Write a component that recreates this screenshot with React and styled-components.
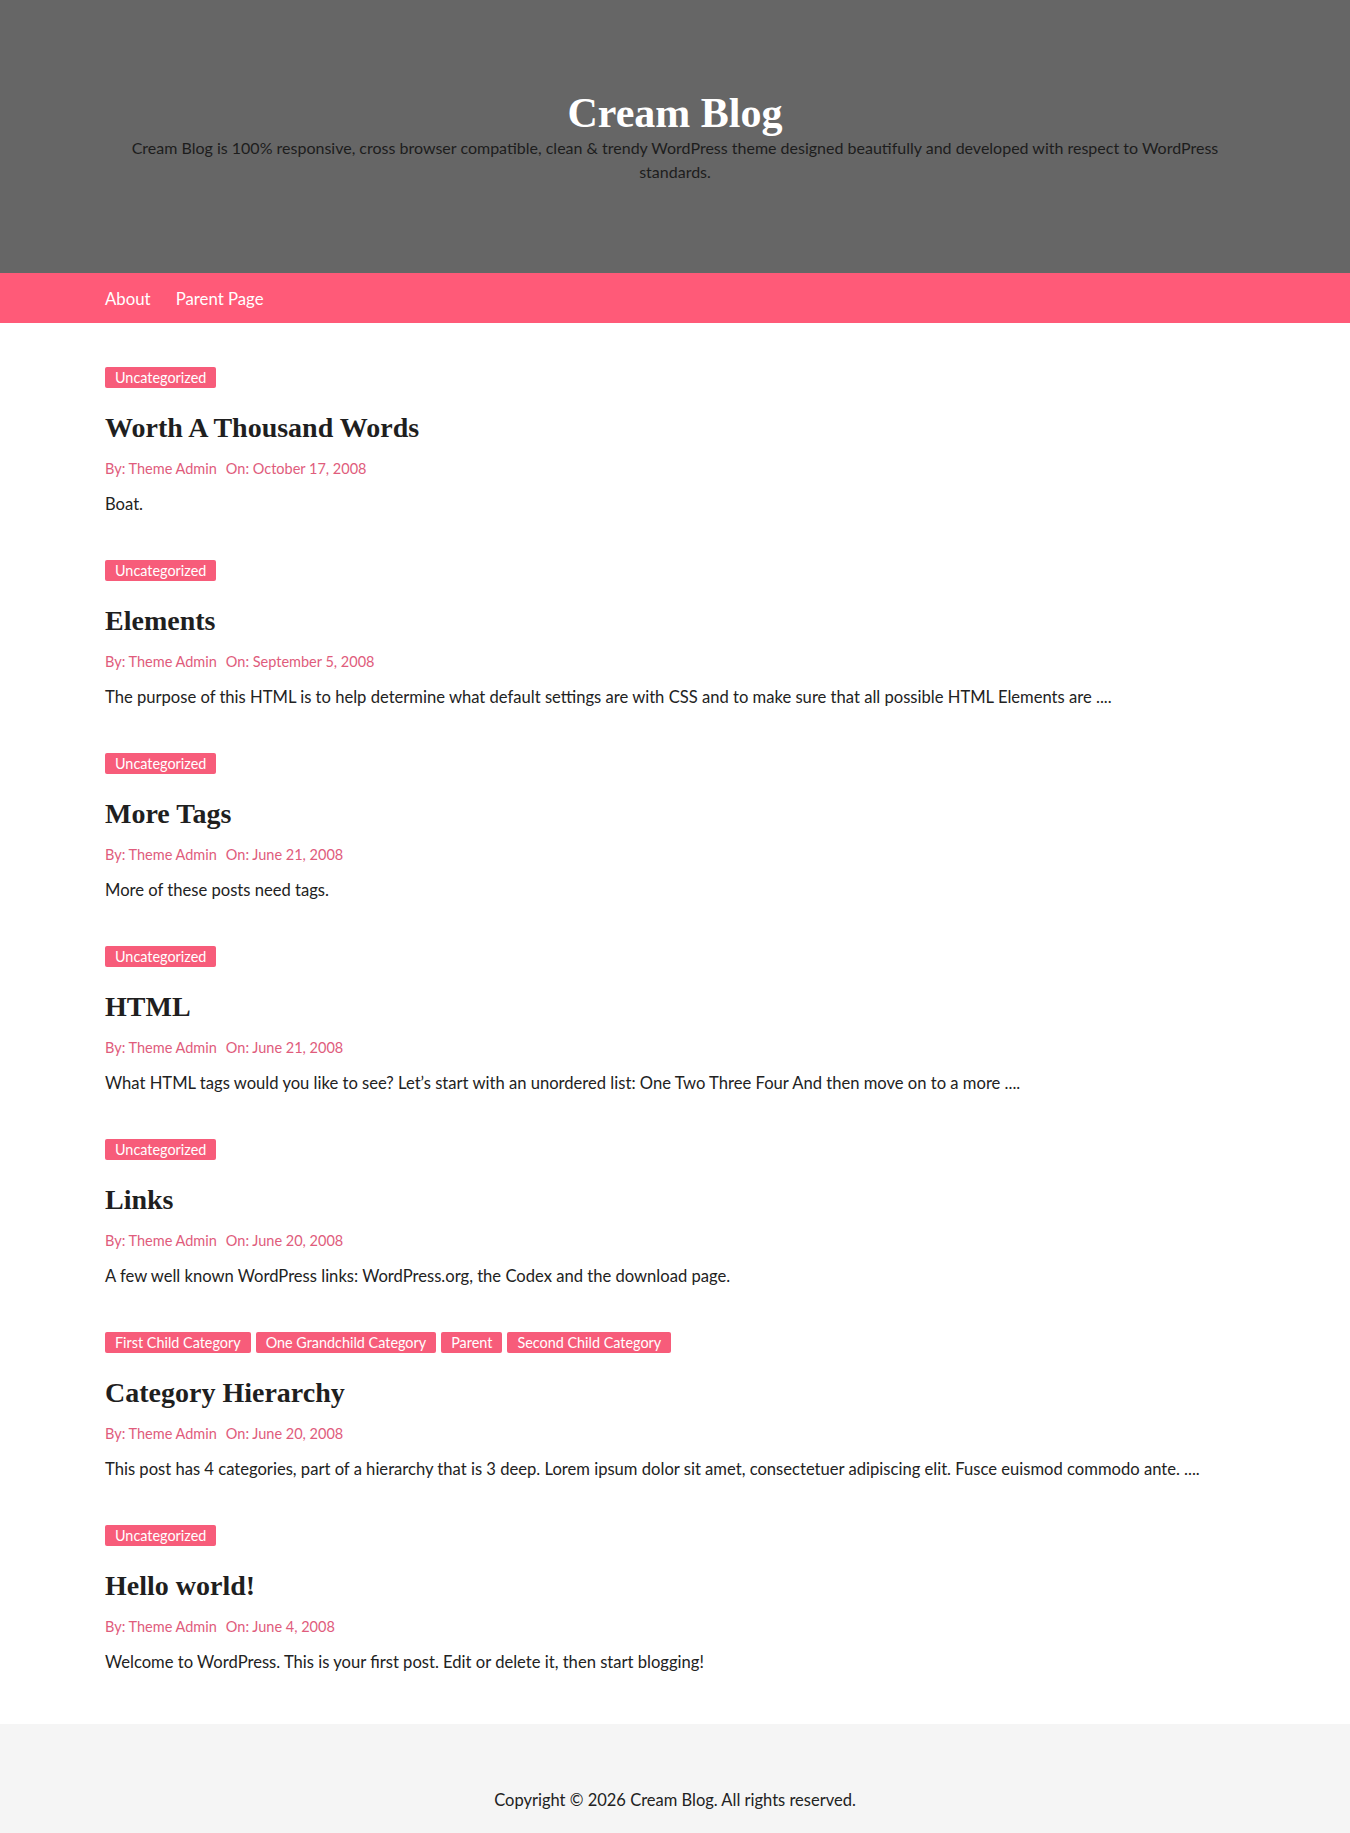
import React from 'react';
import styled, { createGlobalStyle } from 'styled-components';

const GlobalStyle = createGlobalStyle`
  body {
    margin: 0;
    background: #fff;
    font-family: Lato, "Liberation Sans", sans-serif;
    color: #222;
  }
`;

const posts = [
  {
    cats: ['Uncategorized'],
    title: 'Worth A Thousand Words',
    date: 'October 17, 2008',
    excerpt: 'Boat.',
  },
  {
    cats: ['Uncategorized'],
    title: 'Elements',
    date: 'September 5, 2008',
    excerpt:
      'The purpose of this HTML is to help determine what default settings are with CSS and to make sure that all possible HTML Elements are ....',
  },
  {
    cats: ['Uncategorized'],
    title: 'More Tags',
    date: 'June 21, 2008',
    excerpt: 'More of these posts need tags.',
  },
  {
    cats: ['Uncategorized'],
    title: 'HTML',
    date: 'June 21, 2008',
    excerpt:
      'What HTML tags would you like to see? Let’s start with an unordered list: One Two Three Four And then move on to a more ....',
  },
  {
    cats: ['Uncategorized'],
    title: 'Links',
    date: 'June 20, 2008',
    excerpt: 'A few well known WordPress links: WordPress.org, the Codex and the download page.',
  },
  {
    cats: ['First Child Category', 'One Grandchild Category', 'Parent', 'Second Child Category'],
    title: 'Category Hierarchy',
    date: 'June 20, 2008',
    excerpt:
      'This post has 4 categories, part of a hierarchy that is 3 deep. Lorem ipsum dolor sit amet, consectetuer adipiscing elit. Fusce euismod commodo ante. ....',
  },
  {
    cats: ['Uncategorized'],
    title: 'Hello world!',
    date: 'June 4, 2008',
    excerpt: 'Welcome to WordPress. This is your first post. Edit or delete it, then start blogging!',
  },
];

function App() {
  return (
    <>
      <GlobalStyle />
      <Masthead>
        <SiteTitle>Cream Blog</SiteTitle>
        <Tagline>
          Cream Blog is 100% responsive, cross browser compatible, clean &amp; trendy WordPress theme
          designed beautifully and developed with respect to WordPress standards.
        </Tagline>
      </Masthead>
      <NavBar>
        <Container>
          <NavList>
            <NavLink href="#">About</NavLink>
            <NavLink href="#">Parent Page</NavLink>
          </NavList>
        </Container>
      </NavBar>
      <Main>
        <Container>
          {posts.map((post) => (
            <Post key={post.title}>
              <CatList>
                {post.cats.map((c) => (
                  <CatTag key={c}>{c}</CatTag>
                ))}
              </CatList>
              <PostTitle>{post.title}</PostTitle>
              <Meta>
                <span>By: Theme Admin</span>
                <span>On: {post.date}</span>
              </Meta>
              <Excerpt>{post.excerpt}</Excerpt>
            </Post>
          ))}
        </Container>
      </Main>
      <Footer>Copyright © 2026 Cream Blog. All rights reserved.</Footer>
    </>
  );
}

export default App;

const Container = styled.div`
  width: 100%;
  max-width: 1140px;
  margin: 0 auto;
`;

const Masthead = styled.header`
  background: #666666;
  height: 273px;
  box-sizing: border-box;
  padding-top: 90px;
  text-align: center;
`;

const SiteTitle = styled.h1`
  margin: 0;
  font-family: "Liberation Serif", serif;
  font-size: 42px;
  line-height: 46px;
  font-weight: 700;
  color: #fff;
`;

const Tagline = styled.p`
  max-width: 1110px;
  margin: 0 auto;
  font-size: 16px;
  line-height: 24px;
  color: #1d1d1d;
`;

const NavBar = styled.nav`
  background: #ff5a78;
  height: 50px;
  display: flex;
  align-items: center;
`;

const NavList = styled.div`
  display: flex;
  gap: 25px;
`;

const NavLink = styled.a`
  color: #fff;
  text-decoration: none;
  font-size: 16.8px;
`;

const Main = styled.main`
  padding: 44px 0 49px;
`;

const Post = styled.article`
  height: 193px;
  &:last-child {
    height: auto;
  }
`;

const CatList = styled.div`
  display: flex;
  gap: 5px;
`;

const CatTag = styled.a`
  background: #f75c7a;
  color: #fff;
  font-size: 14.4px;
  line-height: 21px;
  padding: 0 10px;
  border-radius: 2px;
`;

const PostTitle = styled.h2`
  margin: 22px 0 0;
  font-family: "Liberation Serif", serif;
  font-size: 28px;
  line-height: 36px;
  font-weight: 700;
  color: #1f1f1f;
`;

const Meta = styled.div`
  margin-top: 12px;
  display: flex;
  gap: 9px;
  font-size: 14.5px;
  line-height: 22px;
  color: #e05c7c;
`;

const Excerpt = styled.p`
  margin: 11px 0 0;
  font-size: 16.6px;
  line-height: 26px;
  color: #222;
`;

const Footer = styled.footer`
  background: #f5f5f5;
  padding: 64px 0 22px;
  text-align: center;
  font-size: 16.5px;
  line-height: 24px;
  color: #222;
`;
